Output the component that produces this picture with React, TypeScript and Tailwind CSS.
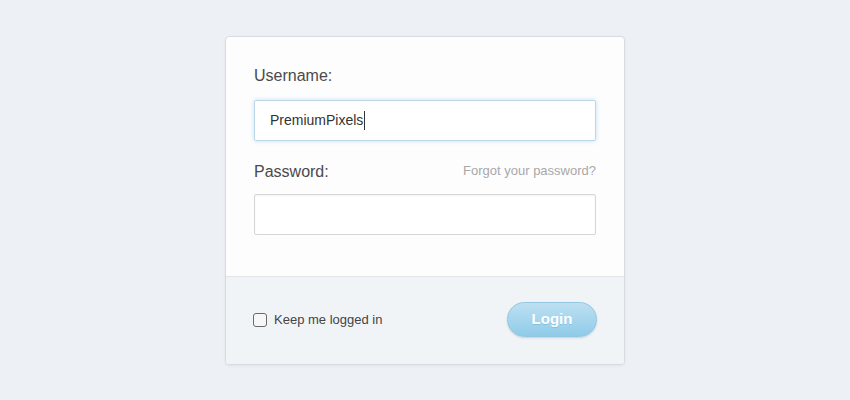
export default function App() {
  return (
    <div className="w-[850px] h-[400px] bg-[#edf1f5] pt-[36px] font-['Liberation_Sans',Arial,sans-serif]">
      <div className="mx-auto w-[400px] h-[329px] rounded-[4px] border border-[#d6dce2] bg-[#fdfdfe] shadow-[0_1px_3px_rgba(0,0,0,0.06)] overflow-hidden flex flex-col">
        <div className="flex-1 px-[28px] pt-[29px]">
          <div className="text-[16px] text-[#4a4a4a] leading-[20px]">Username:</div>
          <div className="mt-[14px] h-[41px] border border-[#bcd7ea] bg-white rounded-[2px] shadow-[0_0_5px_rgba(140,190,225,0.45)] flex items-center pl-[15px] text-[14px] text-[#333]">
            PremiumPixels
            <span className="ml-[1px] w-[1px] h-[19px] bg-[#333]" />
          </div>
          <div className="mt-[21px] flex items-end justify-between">
            <span className="text-[16px] text-[#4a4a4a] leading-[20px]">Password:</span>
            <span className="text-[13px] text-[#a8a8a8] leading-[16px] pb-[3px]">Forgot your password?</span>
          </div>
          <div className="mt-[12px] h-[41px] border border-[#d3d7da] bg-white rounded-[2px] shadow-[inset_0_1px_2px_rgba(0,0,0,0.05)]" />
        </div>
        <div className="h-[88px] border-t border-[#e2e6ea] bg-[#f1f4f7] flex items-center justify-between px-[27px] pb-[2px]">
          <label className="flex items-center gap-[7px]">
            <span className="w-[14px] h-[14px] rounded-[3px] border border-[#6a6a6a] bg-[#f7f7f7]" />
            <span className="text-[13px] text-[#444]">Keep me logged in</span>
          </label>
          <button className="w-[90px] h-[35px] rounded-full border border-[#92c7e2] bg-gradient-to-b from-[#bde0f2] to-[#8fcbe9] text-white font-bold text-[15px] shadow-[0_1px_2px_rgba(0,0,0,0.15)] [text-shadow:0_1px_0_rgba(80,150,190,0.3)]">
            Login
          </button>
        </div>
      </div>
    </div>
  );
}
